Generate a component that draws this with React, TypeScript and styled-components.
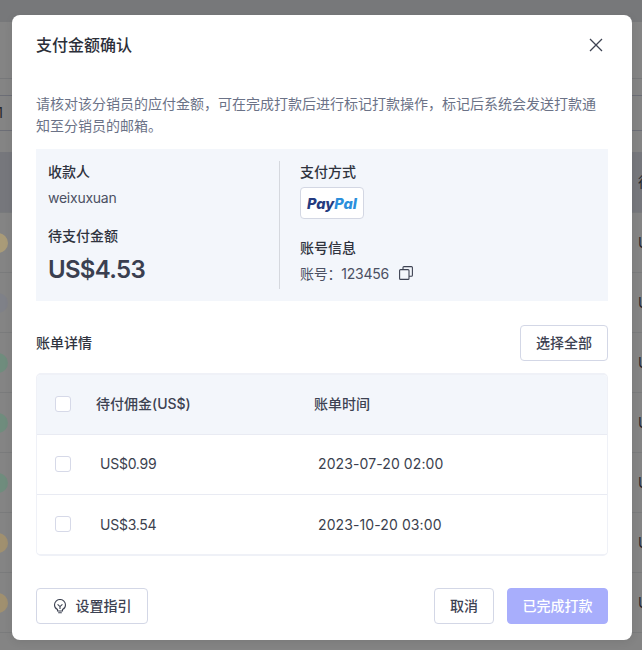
import React from "react";
import styled, { createGlobalStyle } from "styled-components";

const GlobalStyle = createGlobalStyle`
  html, body {
    margin: 0;
    padding: 0;
    background: #848484;
  }
  body {
    font-family: Inter, "Noto Sans CJK SC", sans-serif;
    font-size: 14px;
    color: #2f333e;
  }
  * {
    box-sizing: border-box;
  }
`;

const Page = styled.div`
  position: relative;
  width: 642px;
  height: 650px;
  overflow: hidden;
  background: #848484;
`;

// the dimmed page behind the dialog
const Band = styled.div<{ $h: number; $bg?: string; $line?: string }>`
  display: flex;
  align-items: center;
  justify-content: space-between;
  height: ${(p) => p.$h}px;
  background: ${(p) => p.$bg || "transparent"};
  border-bottom: 1px solid ${(p) => p.$line || "transparent"};
  color: #24262b;
`;

const Dot = styled.span<{ $color: string }>`
  width: 20px;
  height: 20px;
  margin-left: -12px;
  border-radius: 50%;
  background: ${(p) => p.$color};
`;

const CutText = styled.span`
  width: 4px;
  overflow: hidden;
  white-space: nowrap;
  line-height: 20px;
`;

const CutLeft = styled.span`
  width: 3px;
  overflow: hidden;
  direction: rtl;
  line-height: 20px;
`;

const Modal = styled.div`
  position: absolute;
  top: 15px;
  left: 12px;
  display: flex;
  flex-direction: column;
  width: 620px;
  height: 625px;
  padding: 0 24px;
  background: #fff;
  border-radius: 8px;
  box-shadow: 0 2px 8px rgba(0, 0, 0, 0.08);
`;

const ModalHeader = styled.div`
  display: flex;
  align-items: center;
  justify-content: space-between;
  height: 60px;
  flex-shrink: 0;
`;

const Title = styled.div`
  font-size: 16px;
  font-weight: 500;
  line-height: 24px;
  color: #2b2e38;
`;

const CloseBtn = styled.button`
  display: flex;
  padding: 0;
  margin-right: 4px;
  border: none;
  background: none;
  color: #3d4252;
`;

const Desc = styled.p`
  margin: 18px 0 12px;
  line-height: 22px;
  color: #6b7287;
`;

const InfoPanel = styled.div`
  display: flex;
  height: 152px;
  padding: 12px;
  background: #f3f6fb;
`;

const InfoLeft = styled.div`
  width: 232px;
  flex-shrink: 0;
  border-right: 1px solid #d5d8de;
`;

const InfoRight = styled.div`
  padding-left: 20px;
`;

const Label = styled.div<{ $top?: number }>`
  margin-top: ${(p) => p.$top || 0}px;
  font-weight: 500;
  line-height: 22px;
  color: #2f333e;
`;

const Value = styled.div`
  display: flex;
  align-items: center;
  margin-top: 4px;
  line-height: 22px;
  letter-spacing: -0.25px;
  color: #4b5063;
`;

const Amount = styled.div`
  margin-top: 7px;
  font-size: 24px;
  font-weight: 600;
  line-height: 32px;
  letter-spacing: -0.7px;
  color: #3a3f50;
`;

const PayPalBadge = styled.div`
  display: flex;
  align-items: center;
  justify-content: center;
  width: 64px;
  height: 32px;
  margin-top: 4px;
  background: #fff;
  border: 1px solid #d3d7e3;
  border-radius: 4px;
  font-size: 14.5px;
  font-weight: 800;
  font-style: italic;
`;

const PayPart = styled.span<{ $color: string }>`
  color: ${(p) => p.$color};
`;

const CopyIcon = styled.svg`
  margin-left: 10px;
  margin-top: -2px;
  color: #3d4252;
`;

const SectionHead = styled.div`
  display: flex;
  align-items: center;
  justify-content: space-between;
  margin-top: 24px;
`;

const SectionTitle = styled.div`
  padding-bottom: 2px;
  font-weight: 500;
  color: #2f333e;
`;

const Btn = styled.button<{ $w: number; $primary?: boolean }>`
  display: flex;
  align-items: center;
  justify-content: center;
  width: ${(p) => p.$w}px;
  height: 36px;
  padding: 0 0 2px;
  font-family: inherit;
  font-size: 14px;
  font-weight: 500;
  color: ${(p) => (p.$primary ? "#fff" : "#3d4252")};
  background: ${(p) => (p.$primary ? "#a8aefc" : "#fff")};
  border: 1px solid ${(p) => (p.$primary ? "#a8aefc" : "#d3d7e6")};
  border-radius: 4px;
`;

const BulbIcon = styled.svg`
  margin-right: 9px;
  margin-top: 2px;
  color: #3d4252;
`;

const Table = styled.div`
  height: 183px;
  margin-top: 12px;
  overflow: hidden;
  border: 2px solid #eff1f7;
  border-left-width: 1px;
  border-right-width: 1px;
  border-radius: 5px;
`;

const TableRow = styled.div<{ $head?: boolean }>`
  display: grid;
  grid-template-columns: 59px 218px 1fr;
  align-items: center;
  height: 60px;
  padding-bottom: 2px;
  background: ${(p) => (p.$head ? "#f3f6fb" : "#fff")};
  border-bottom: 1px solid #e9ebf3;
  &:last-child {
    border-bottom: none;
  }
`;

const CheckCell = styled.div`
  padding-left: 18px;
  display: flex;
`;

const CheckBox = styled.span`
  width: 16px;
  height: 16px;
  background: #fff;
  border: 1px solid #d6d9e8;
  border-radius: 3px;
`;

const HeadCell = styled.div`
  padding-bottom: 1px;
  font-weight: 500;
  color: #3d4252;
`;

const AmountCell = styled.div`
  padding-left: 4px;
  letter-spacing: -0.25px;
  color: #3b3f4e;
`;

const TimeCell = styled.div`
  padding-left: 4px;
  letter-spacing: 0.1px;
  color: #3b3f4e;
`;

const Footer = styled.div`
  display: flex;
  align-items: center;
  margin-top: 32px;
`;

const FooterRight = styled.div`
  display: flex;
  gap: 13px;
  margin-left: auto;
`;

const dots = ["#a99b78", "#7f8188", "#6f8c7d", "#6f8c7d", "#6f8c7d", "#a0906f", "#a0906f"];

const bills = [
  { amount: "US$0.99", time: "2023-07-20 02:00" },
  { amount: "US$3.54", time: "2023-10-20 03:00" },
];

export default function App() {
  return (
    <Page>
      <GlobalStyle />
      <Band $h={22} $bg="#77787a" />
      <Band $h={57} $line="#77787a" />
      <Band $h={17} $line="#6c6e76" />
      <Band $h={35} $line="#6c6e76">
        <CutLeft>1</CutLeft>
      </Band>
      <Band $h={21} />
      <Band $h={61} $bg="#76777c" $line="#787a7c">
        <span />
        <CutText>待付</CutText>
      </Band>
      {dots.map((color, i) => (
        <Band key={i} $h={60} $line="#7a7b7c">
          <Dot $color={color} />
          <CutText>US$</CutText>
        </Band>
      ))}

      <Modal>
        <ModalHeader>
          <Title>支付金额确认</Title>
          <CloseBtn>
            <svg width="16" height="16" viewBox="0 0 16 16" fill="none" stroke="currentColor" strokeWidth="1.3">
              <path d="M2 2l12 12M14 2L2 14" />
            </svg>
          </CloseBtn>
        </ModalHeader>

        <Desc>
          请核对该分销员的应付金额，可在完成打款后进行标记打款操作，标记后系统会发送打款通知至分销员的邮箱。
        </Desc>

        <InfoPanel>
          <InfoLeft>
            <Label>收款人</Label>
            <Value>weixuxuan</Value>
            <Label $top={16}>待支付金额</Label>
            <Amount>US$4.53</Amount>
          </InfoLeft>
          <InfoRight>
            <Label>支付方式</Label>
            <PayPalBadge>
              <PayPart $color="#253b80">Pay</PayPart>
              <PayPart $color="#2c8fdc">Pal</PayPart>
            </PayPalBadge>
            <Label $top={18}>账号信息</Label>
            <Value>
              账号：123456
              <CopyIcon width="14" height="14" viewBox="0 0 14 14" fill="none" stroke="currentColor" strokeWidth="1.1">
                <rect x="0.6" y="3.6" width="9.4" height="9.8" rx="1" />
                <path d="M4 3.6V1.6a1 1 0 0 1 1-1h7.4a1 1 0 0 1 1 1v7.6a1 1 0 0 1-1 1H10" />
              </CopyIcon>
            </Value>
          </InfoRight>
        </InfoPanel>

        <SectionHead>
          <SectionTitle>账单详情</SectionTitle>
          <Btn $w={88}>选择全部</Btn>
        </SectionHead>

        <Table>
          <TableRow $head>
            <CheckCell>
              <CheckBox />
            </CheckCell>
            <HeadCell>待付佣金(US$)</HeadCell>
            <HeadCell>账单时间</HeadCell>
          </TableRow>
          {bills.map((bill) => (
            <TableRow key={bill.amount}>
              <CheckCell>
                <CheckBox />
              </CheckCell>
              <AmountCell>{bill.amount}</AmountCell>
              <TimeCell>{bill.time}</TimeCell>
            </TableRow>
          ))}
        </Table>

        <Footer>
          <Btn $w={112}>
            <BulbIcon width="14" height="15" viewBox="0 0 14 15" fill="none" stroke="currentColor" strokeWidth="1.1">
              <path d="M4.5 10.6C2.7 9.7 1.5 8 1.5 6a5.5 5.5 0 0 1 11 0c0 2-1.2 3.7-3 4.6v1.4h-5z" />
              <path d="M4.6 5.4L7 7.6l2.4-2.2M7 7.6V10M5.2 13.8h3.6" />
            </BulbIcon>
            设置指引
          </Btn>
          <FooterRight>
            <Btn $w={60}>取消</Btn>
            <Btn $w={101} $primary>
              已完成打款
            </Btn>
          </FooterRight>
        </Footer>
      </Modal>
    </Page>
  );
}
